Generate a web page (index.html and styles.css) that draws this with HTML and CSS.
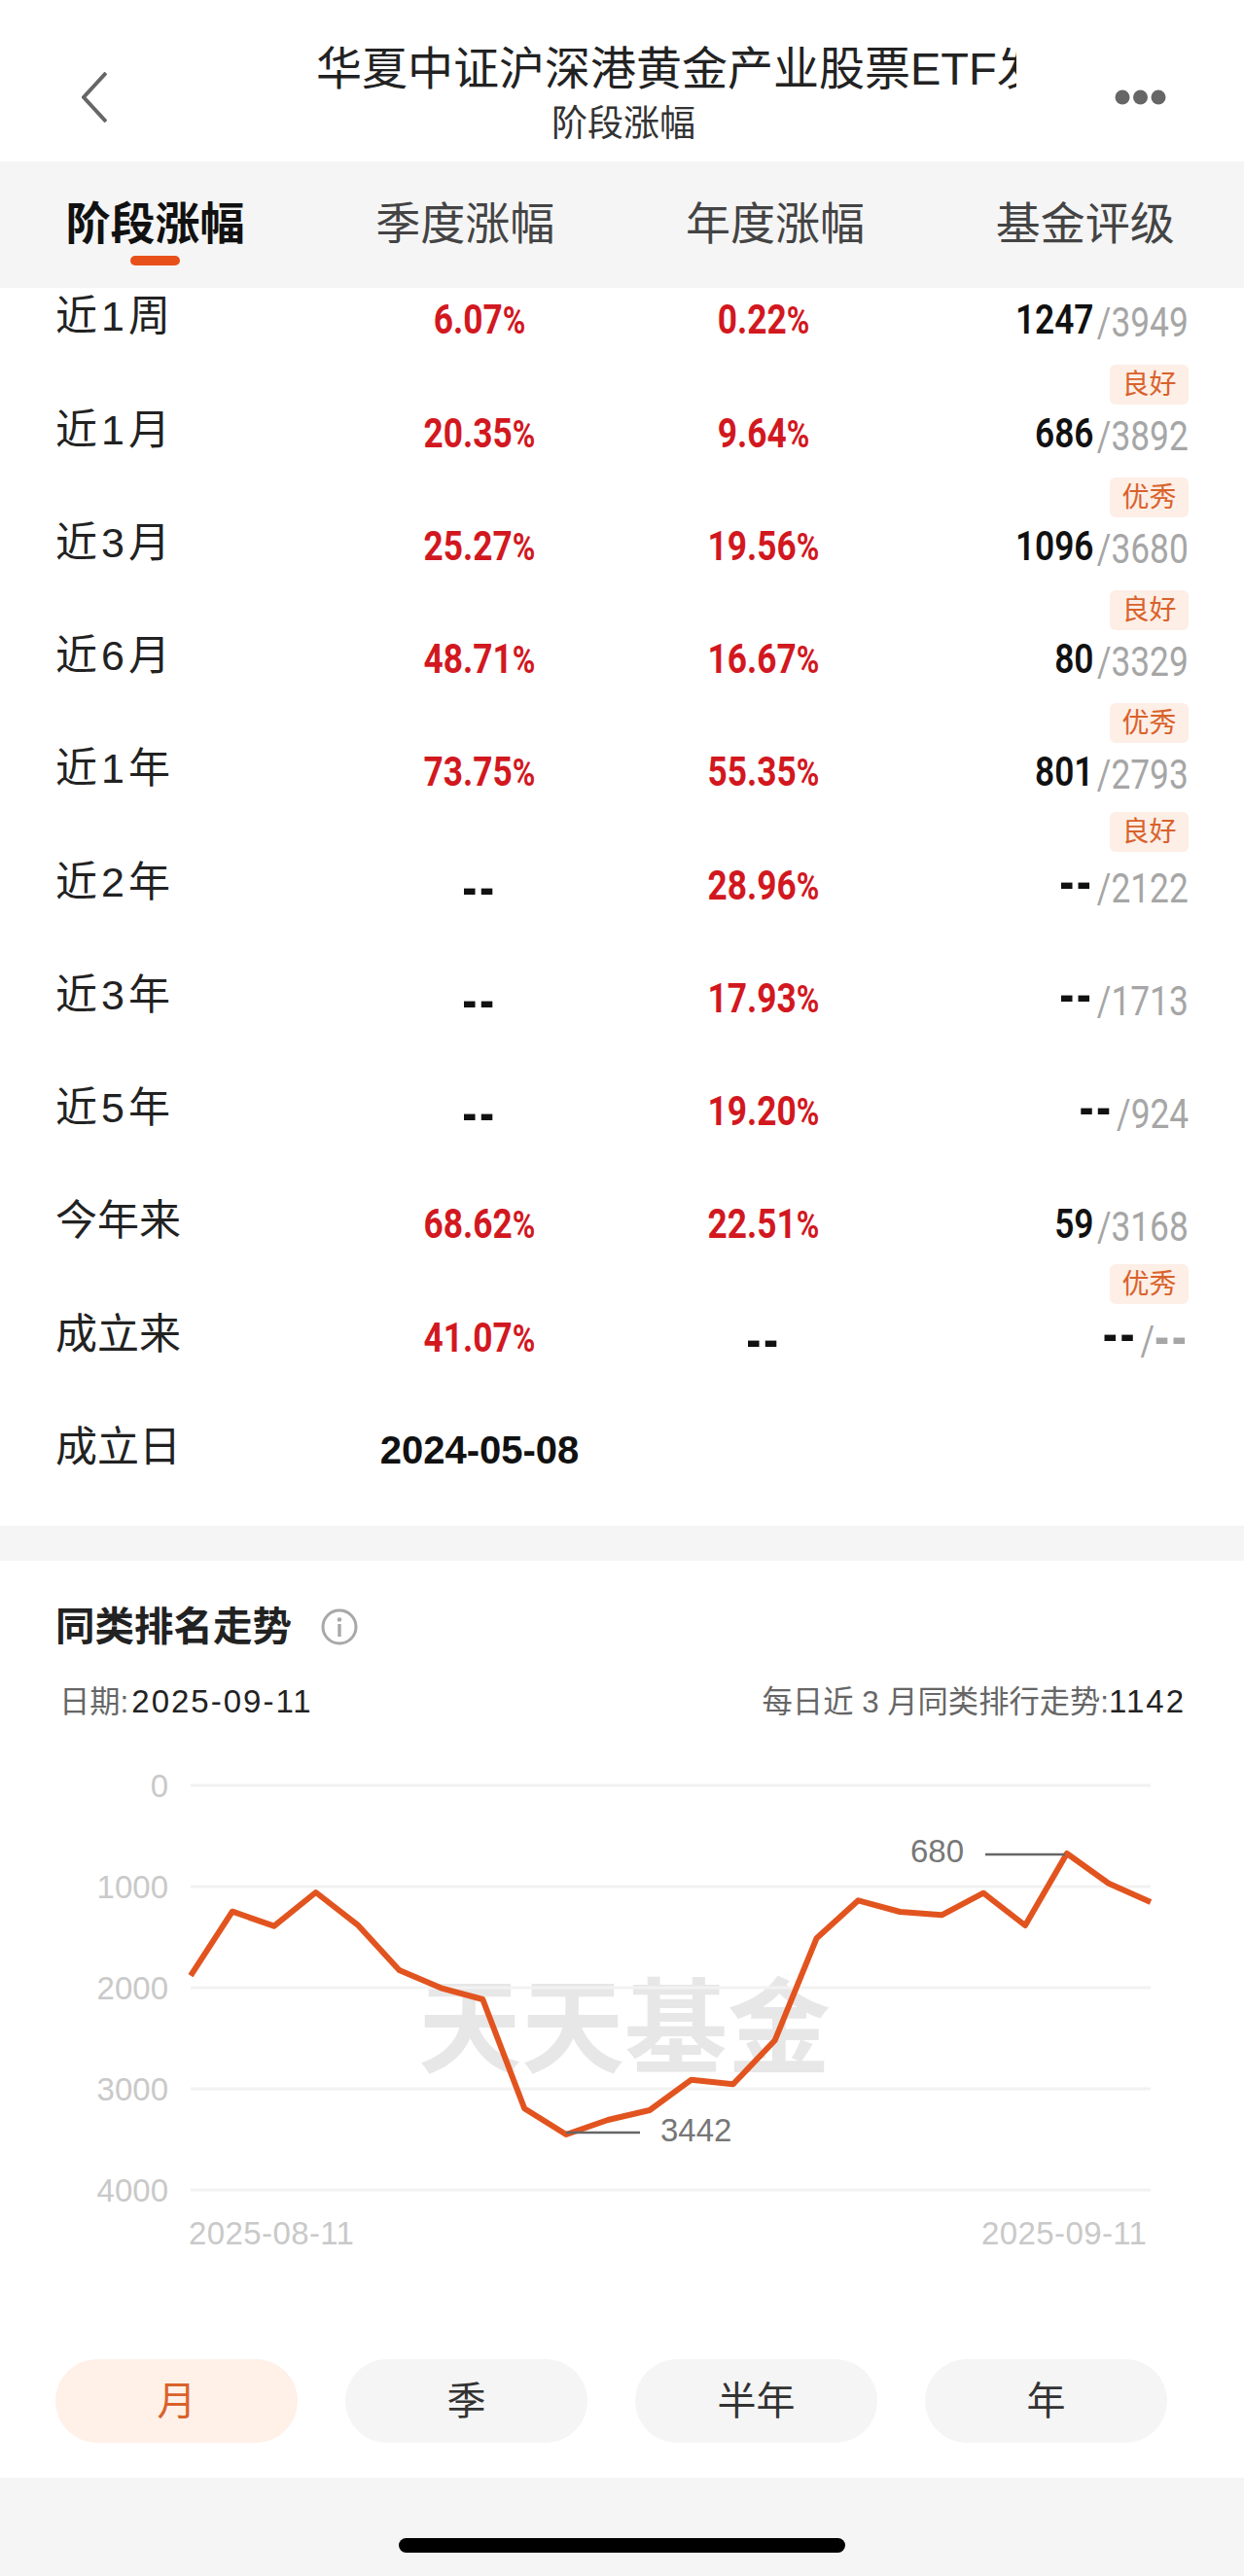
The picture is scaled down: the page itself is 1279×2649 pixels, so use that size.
FILE: index.html
```html
<!DOCTYPE html>
<html lang="zh-CN">
<head>
    <meta charset="UTF-8">
    <meta name="viewport" content="width=device-width, initial-scale=1.0">
    <title>阶段涨幅</title>
    <link rel="stylesheet" href="styles.css">
</head>
<body>
    <header class="topbar">
        <svg class="back" width="26" height="52" viewBox="0 0 26 52"><path d="M25 1 L2 26 L25 51" fill="none" stroke="#666" stroke-width="4"/></svg>
        <div class="titles">
            <div class="title">华夏中证沪深港黄金产业股票ETF发起式联接</div>
            <div class="subtitle">阶段涨幅</div>
        </div>
        <svg class="more" width="53" height="18" viewBox="0 0 53 18"><circle cx="8" cy="9" r="7.5" fill="#666"/><circle cx="26.5" cy="9" r="7.5" fill="#666"/><circle cx="45" cy="9" r="7.5" fill="#666"/></svg>
    </header>

    <nav class="tabs">
        <div class="tab active">阶段涨幅<span class="underline"></span></div>
        <div class="tab">季度涨幅<span class="underline hidden"></span></div>
        <div class="tab">年度涨幅<span class="underline hidden"></span></div>
        <div class="tab">基金评级<span class="underline hidden"></span></div>
    </nav>

    <section class="table">
        <div class="row">
            <div class="label">近<span class="digit">1</span>周</div><div class="val up">6.07<small>%</small></div><div class="val up">0.22<small>%</small></div>
            <div class="rank"><div class="rank-num"><b>1247</b><i>/3949</i></div></div>
        </div>
        <div class="row">
            <div class="label">近<span class="digit">1</span>月</div><div class="val up">20.35<small>%</small></div><div class="val up">9.64<small>%</small></div>
            <div class="rank"><span class="badge">良好</span><div class="rank-num"><b>686</b><i>/3892</i></div></div>
        </div>
        <div class="row">
            <div class="label">近<span class="digit">3</span>月</div><div class="val up">25.27<small>%</small></div><div class="val up">19.56<small>%</small></div>
            <div class="rank"><span class="badge">优秀</span><div class="rank-num"><b>1096</b><i>/3680</i></div></div>
        </div>
        <div class="row">
            <div class="label">近<span class="digit">6</span>月</div><div class="val up">48.71<small>%</small></div><div class="val up">16.67<small>%</small></div>
            <div class="rank"><span class="badge">良好</span><div class="rank-num"><b>80</b><i>/3329</i></div></div>
        </div>
        <div class="row">
            <div class="label">近<span class="digit">1</span>年</div><div class="val up">73.75<small>%</small></div><div class="val up">55.35<small>%</small></div>
            <div class="rank"><span class="badge">优秀</span><div class="rank-num"><b>801</b><i>/2793</i></div></div>
        </div>
        <div class="row">
            <div class="label">近<span class="digit">2</span>年</div><div class="val dash">--</div><div class="val up">28.96<small>%</small></div>
            <div class="rank"><span class="badge">良好</span><div class="rank-num"><b class="dash">--</b><i>/2122</i></div></div>
        </div>
        <div class="row">
            <div class="label">近<span class="digit">3</span>年</div><div class="val dash">--</div><div class="val up">17.93<small>%</small></div>
            <div class="rank"><div class="rank-num"><b class="dash">--</b><i>/1713</i></div></div>
        </div>
        <div class="row">
            <div class="label">近<span class="digit">5</span>年</div><div class="val dash">--</div><div class="val up">19.20<small>%</small></div>
            <div class="rank"><div class="rank-num"><b class="dash">--</b><i>/924</i></div></div>
        </div>
        <div class="row">
            <div class="label">今年来</div><div class="val up">68.62<small>%</small></div><div class="val up">22.51<small>%</small></div>
            <div class="rank"><div class="rank-num"><b>59</b><i>/3168</i></div></div>
        </div>
        <div class="row">
            <div class="label">成立来</div><div class="val up">41.07<small>%</small></div><div class="val dash">--</div>
            <div class="rank"><span class="badge">优秀</span><div class="rank-num"><b class="dash">--</b><i>/<span class="dash">--</span></i></div></div>
        </div>
        <div class="row">
            <div class="label">成立日</div><div class="val date">2024-05-08</div>
        </div>
    </section>

    <div class="band"></div>

    <section class="trend">
        <div class="trend-head">
            <h2>同类排名走势</h2>
            <svg width="38" height="38" viewBox="0 0 38 38"><circle cx="19" cy="19" r="17" fill="none" stroke="#a8a8a8" stroke-width="3"/><circle cx="19" cy="11.5" r="2.2" fill="#a8a8a8"/><rect x="17.3" y="16" width="3.4" height="13" fill="#a8a8a8"/></svg>
        </div>
        <div class="trend-meta">
            <div>日期:<span class="num gap">2025-09-11</span></div>
            <div>每日近 3 月同类排行走势:<span class="num">1142</span></div>
        </div>
        <svg class="chart" width="1279" height="530" viewBox="0 0 1279 530">
            <text class="watermark" x="430" y="323">天天基金</text>
            <g stroke="#f2f2f2" stroke-width="3">
                <line x1="196" y1="36" x2="1183" y2="36"/>
                <line x1="196" y1="140" x2="1183" y2="140"/>
                <line x1="196" y1="244" x2="1183" y2="244"/>
                <line x1="196" y1="348" x2="1183" y2="348"/>
                <line x1="196" y1="452" x2="1183" y2="452"/>
            </g>
            <g class="axis" text-anchor="end">
                <text x="173" y="48">0</text>
                <text x="173" y="152">1000</text>
                <text x="173" y="256">2000</text>
                <text x="173" y="360">3000</text>
                <text x="173" y="464">4000</text>
            </g>
            <g class="axis dates">
                <text x="194" y="508">2025-08-11</text>
                <text x="1009" y="508">2025-09-11</text>
            </g>
            <polyline fill="none" stroke="#e2541f" stroke-width="6" stroke-linejoin="round" points="196,231.7 238.9,165.7 281.8,180.7 324.7,146 367.6,179.3 410.5,226 453.4,244.3 496.3,256 539.2,368.3 582.1,395 625,380 667.9,370 710.8,338.7 753.7,343.3 796.6,298.3 839.5,193.3 882.4,154.3 925.3,166 968.2,169.3 1011.1,146.7 1054,180 1096.9,106 1139.8,136.7 1183,156"/>
            <g stroke="#666" stroke-width="2.5">
                <line x1="1013" y1="107" x2="1095" y2="107"/>
                <line x1="582" y1="393" x2="658" y2="393"/>
            </g>
            <g class="note">
                <text x="936" y="115">680</text>
                <text x="679" y="402">3442</text>
            </g>
        </svg>
        <div class="ranges">
            <div class="range active">月</div>
            <div class="range">季</div>
            <div class="range">半年</div>
            <div class="range">年</div>
        </div>
    </section>

    <footer class="bottom"><div class="home-bar"></div></footer>
</body>
</html>
```

FILE: styles.css
```css
body {
    margin: 0;
    height: 2649px;
    overflow: hidden;
    background-color: #fff;
    color: #333;
    font-family: "Liberation Sans", "Noto Sans CJK SC", sans-serif;
}

/* top bar */
.topbar {
    display: flex;
    align-items: flex-start;
    height: 166px;
    box-sizing: border-box;
    padding: 44px 0 0 84px;
}

.back {
    margin-top: 30px;
}

.titles {
    width: 720px;
    margin-left: 215px;
    overflow: hidden;
}

.title {
    font-size: 47px;
    line-height: 54px;
    color: #222;
    white-space: nowrap;
}

.subtitle {
    width: 632px;
    margin-top: 5px;
    text-align: center;
    font-size: 37px;
    line-height: 50px;
    color: #333;
}

.more {
    margin: 47px 0 0 101px;
}

/* tabs */
.tabs {
    position: relative;
    z-index: 1;
    display: flex;
    height: 130px;
    padding-right: 4px;
    background-color: #f5f5f5;
}

.tab {
    flex: 1;
    display: flex;
    flex-direction: column;
    align-items: center;
    padding-top: 36px;
    font-size: 46px;
    line-height: 56px;
    color: #444;
}

.tab.active {
    font-weight: 700;
    color: #111;
}

.underline {
    width: 51px;
    height: 10px;
    margin-top: 5px;
    border-radius: 5px;
    background-color: #e8501a;
}

.underline.hidden {
    visibility: hidden;
}

/* table */
.table {
    margin-top: -44px;
    padding: 0 57px;
}

.row {
    display: grid;
    grid-template-columns: 286px 300px 284px 1fr;
    align-items: end;
    height: 116.25px;
    box-sizing: border-box;
    padding-bottom: 18px;
}

.label {
    padding-bottom: 5px;
    font-size: 43px;
    line-height: 40px;
    color: #222;
}

.digit {
    margin: 0 4px;
}

/* the app's number font is narrower than anything installed */
.val {
    text-align: center;
    font-family: Roboto, sans-serif;
    font-weight: 700;
    font-size: 42px;
    line-height: 40px;
    transform: scaleX(0.84);
}

.val small {
    font-size: 38px;
}

.up {
    color: #d2181f;
}

.dash {
    font-family: "Liberation Sans", sans-serif;
    font-size: 54px;
    font-weight: 700;
    letter-spacing: 3px;
    color: #111;
}

.val.date {
    position: relative;
    top: -2px;
    font-family: "Liberation Sans", sans-serif;
    font-weight: 700;
    font-size: 40px;
    color: #111;
    transform: none;
}

.rank {
    display: flex;
    flex-direction: column;
    align-items: flex-end;
}

.badge {
    width: 81px;
    height: 41px;
    margin-bottom: 10px;
    border-radius: 6px;
    background-color: #fdeee6;
    color: #d9622b;
    font-size: 28px;
    line-height: 41px;
    text-align: center;
}

.rank-num {
    margin-bottom: -2px;
    font-family: Roboto, sans-serif;
    font-size: 42px;
    line-height: 40px;
    white-space: nowrap;
    transform: scaleX(0.84);
    transform-origin: right center;
}

.rank-num b {
    margin-right: 4px;
    font-weight: 600;
    color: #111;
}

.rank-num b.dash {
    font-weight: 700;
}

.rank-num i {
    font-style: normal;
    vertical-align: -3px;
    color: #a6a6a6;
}

.rank-num i .dash {
    color: #a6a6a6;
}

.band {
    height: 36px;
    margin-top: 38px;
    background-color: #f5f5f5;
}

/* trend */
.trend-head {
    display: flex;
    align-items: center;
    gap: 30px;
    height: 50px;
    margin-top: 43px;
    padding-left: 57px;
}

.trend-head h2 {
    margin: 0;
    font-size: 40.5px;
    line-height: 50px;
    color: #222;
}

.trend-meta {
    display: flex;
    justify-content: space-between;
    height: 50px;
    margin-top: 27px;
    padding: 0 60px 0 61px;
    font-size: 31.3px;
    line-height: 50px;
    color: #666;
}

.num {
    letter-spacing: 2px;
    color: #222;
    font-size: 33px;
}

.num.gap {
    margin-left: 3px;
}

.chart {
    display: block;
    margin-top: 25px;
}

.watermark {
    font-size: 106px;
    font-weight: 700;
    fill: #e7e7e7;
}

.axis {
    font-size: 33px;
    fill: #c9c9c9;
}

.dates {
    letter-spacing: 0.4px;
}

.note {
    font-size: 33px;
    fill: #777;
}

.ranges {
    display: grid;
    grid-template-columns: repeat(4, 249px);
    gap: 49px;
    margin-top: 96px;
    padding-left: 57px;
}

.range {
    height: 86px;
    border-radius: 43px;
    background-color: #f5f5f5;
    font-size: 40px;
    line-height: 86px;
    text-align: center;
    color: #333;
}

.range.active {
    background-color: #fff0e8;
    color: #d9622b;
}

/* home indicator */
.bottom {
    display: flex;
    justify-content: center;
    height: 101px;
    margin-top: 36px;
    padding-top: 62px;
    box-sizing: border-box;
    background-color: #f5f5f5;
}

.home-bar {
    width: 459px;
    height: 15px;
    border-radius: 8px;
    background-color: #000;
}
```
